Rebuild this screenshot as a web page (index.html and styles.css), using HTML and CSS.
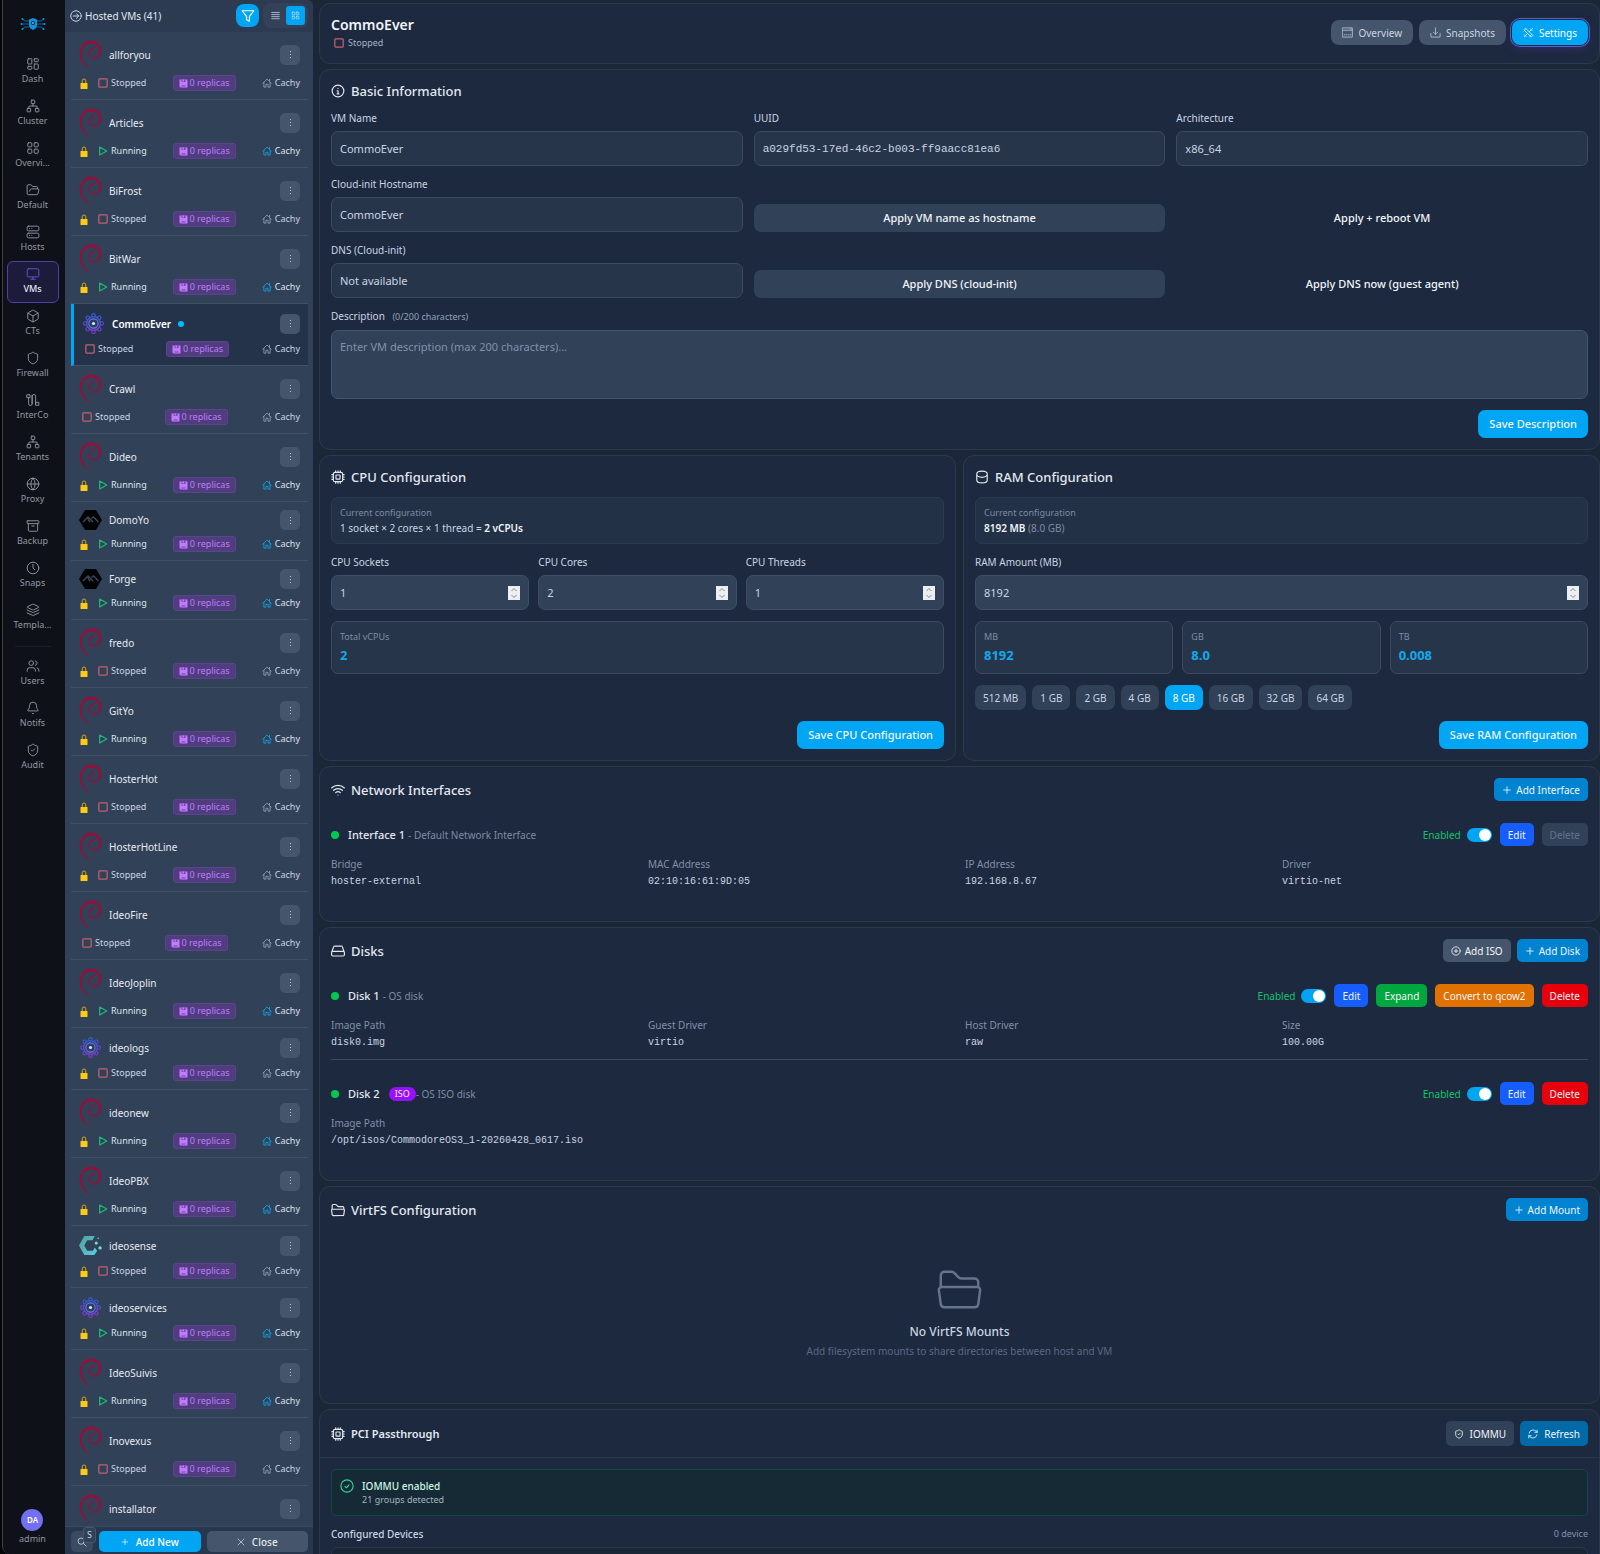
FILE: index.html
```html
<!DOCTYPE html>
<html lang="en">
<head>
    <meta charset="UTF-8">
    <meta name="viewport" content="width=device-width, initial-scale=1.0">
    <title>CommoEver - Settings</title>
    <link rel="stylesheet" href="styles.css">
</head>
<body>
    <!-- Icon sprite -->
    <svg class="sprite" aria-hidden="true">
        <defs>
            <linearGradient id="gear-fill" gradientUnits="userSpaceOnUse" x1="0" y1="0" x2="0" y2="24">
                <stop offset="0" stop-color="#2563d8"/>
                <stop offset="1" stop-color="#8b35d6"/>
            </linearGradient>
            <linearGradient id="sense-fill" x1="0" y1="0" x2="1" y2="1">
                <stop offset="0" stop-color="#4fa39a"/>
                <stop offset="1" stop-color="#5fc8e6"/>
            </linearGradient>
        </defs>
        <symbol id="logo" viewBox="0 0 52 28">
            <g fill="none" stroke="#0a6ba5" stroke-width="2">
                <path d="M18 8H9L6 4M18 14H3M18 20H9l-3 4M34 8h9l3-4M34 14h15M34 20h9l3 4"/>
            </g>
            <g fill="#1192dc">
                <circle cx="5" cy="4" r="2"/><circle cx="3" cy="14" r="2"/><circle cx="5" cy="24" r="2"/>
                <circle cx="47" cy="4" r="2"/><circle cx="49" cy="14" r="2"/><circle cx="47" cy="24" r="2"/>
                <path d="M26 2l8 3v12c0 5-4 7-8 9-4-2-8-4-8-9V5z"/>
            </g>
            <circle cx="26" cy="12" r="4" fill="#0f2536"/>
            <circle cx="26" cy="12" r="2" fill="#4cc3ff"/>
        </symbol>
        <symbol id="dash" viewBox="0 0 24 24"><rect x="3" y="3" width="7" height="9" rx="1"/><rect x="14" y="3" width="7" height="5" rx="1"/><rect x="14" y="12" width="7" height="9" rx="1"/><rect x="3" y="16" width="7" height="5" rx="1"/></symbol>
        <symbol id="cluster" viewBox="0 0 24 24"><rect x="9" y="2" width="6" height="6" rx="1"/><rect x="2" y="16" width="6" height="6" rx="1"/><rect x="16" y="16" width="6" height="6" rx="1"/><path d="M5 16v-3a1 1 0 0 1 1-1h12a1 1 0 0 1 1 1v3M12 12V8"/></symbol>
        <symbol id="grid" viewBox="0 0 24 24"><rect x="3" y="3" width="7" height="7" rx="1.5"/><rect x="14" y="3" width="7" height="7" rx="1.5"/><rect x="3" y="14" width="7" height="7" rx="1.5"/><rect x="14" y="14" width="7" height="7" rx="1.5"/></symbol>
        <symbol id="folder-open" viewBox="0 0 24 24"><path d="M6 14l1.500-2.900A2 2 0 0 1 9.240 10H20a2 2 0 0 1 1.940 2.500l-1.540 6a2 2 0 0 1-1.950 1.500H4a2 2 0 0 1-2-2V5a2 2 0 0 1 2-2h3.900a2 2 0 0 1 1.690.9l.81 1.200a2 2 0 0 0 1.670.9H18a2 2 0 0 1 2 2v2"/></symbol>
        <symbol id="server" viewBox="0 0 24 24"><rect x="2" y="2" width="20" height="8" rx="2"/><rect x="2" y="14" width="20" height="8" rx="2"/><path d="M6 6h.01M10 6h.01M6 18h.01M10 18h.01"/></symbol>
        <symbol id="monitor" viewBox="0 0 24 24"><rect x="2" y="3" width="20" height="14" rx="2"/><path d="M8 21h8M12 17v4"/></symbol>
        <symbol id="box" viewBox="0 0 24 24"><path d="M21 8a2 2 0 0 0-1-1.730l-7-4a2 2 0 0 0-2 0l-7 4A2 2 0 0 0 3 8v8a2 2 0 0 0 1 1.730l7 4a2 2 0 0 0 2 0l7-4A2 2 0 0 0 21 16zM3.300 7l8.700 5 8.700-5M12 22V12"/></symbol>
        <symbol id="shield" viewBox="0 0 24 24"><path d="M20 13c0 5-3.500 7.500-7.660 8.950a1 1 0 0 1-.67 0C7.500 20.500 4 18 4 13V6a1 1 0 0 1 1-1c2 0 4.500-1.200 6.240-2.720a1.170 1.170 0 0 1 1.520 0C14.500 3.800 17 5 19 5a1 1 0 0 1 1 1z"/></symbol>
        <symbol id="shield-check" viewBox="0 0 24 24"><path d="M20 13c0 5-3.500 7.500-7.660 8.950a1 1 0 0 1-.67 0C7.500 20.500 4 18 4 13V6a1 1 0 0 1 1-1c2 0 4.500-1.200 6.240-2.720a1.170 1.170 0 0 1 1.520 0C14.500 3.800 17 5 19 5a1 1 0 0 1 1 1zM9 12l2 2 4-4"/></symbol>
        <symbol id="interco" viewBox="0 0 24 24"><path d="M4.500 8v10.500a3 3 0 0 0 6 0v-13a3 3 0 0 1 6 0V18M2 3h5v5H2zM17 16h5v5h-5zM10.500 4v14"/></symbol>
        <symbol id="globe" viewBox="0 0 24 24"><circle cx="12" cy="12" r="10"/><path d="M12 2a15 15 0 0 0 0 20 15 15 0 0 0 0-20M2 12h20"/></symbol>
        <symbol id="archive" viewBox="0 0 24 24"><rect x="2" y="3" width="20" height="5" rx="1"/><path d="M4 8v11a2 2 0 0 0 2 2h12a2 2 0 0 0 2-2V8M10 12h4"/></symbol>
        <symbol id="clock" viewBox="0 0 24 24"><circle cx="12" cy="12" r="10"/><path d="M12 6v6l3 3"/></symbol>
        <symbol id="layers" viewBox="0 0 24 24"><path d="M12.800 2.200a2 2 0 0 0-1.600 0L2.600 6.100a1 1 0 0 0 0 1.800l8.600 3.900a2 2 0 0 0 1.600 0l8.600-3.900a1 1 0 0 0 0-1.800zM2 12l9.200 4.200a2 2 0 0 0 1.600 0L22 12M2 17l9.200 4.200a2 2 0 0 0 1.600 0L22 17"/></symbol>
        <symbol id="users" viewBox="0 0 24 24"><circle cx="9" cy="7" r="4"/><path d="M16 21v-2a4 4 0 0 0-4-4H6a4 4 0 0 0-4 4v2M22 21v-2a4 4 0 0 0-3-3.870M16 3.130a4 4 0 0 1 0 7.750"/></symbol>
        <symbol id="bell" viewBox="0 0 24 24"><path d="M10.300 21a2 2 0 0 0 3.400 0M3.300 15.300A1 1 0 0 0 4 17h16a1 1 0 0 0 .7-1.700C19.400 14 18 12.500 18 8A6 6 0 0 0 6 8c0 4.500-1.400 6-2.700 7.300"/></symbol>
        <symbol id="arrow-circle" viewBox="0 0 24 24"><circle cx="12" cy="12" r="10.500"/><path d="M6.500 12h11M13 7.500l4.500 4.500-4.500 4.500"/></symbol>
        <symbol id="filter" viewBox="0 0 24 24"><path d="M2 3h20l-7.500 9.500V21l-5-2.500v-6z"/></symbol>
        <symbol id="list" viewBox="0 0 24 24"><path d="M2 4h20M2 9.500h20M2 15h20M2 20.500h20"/></symbol>
        <symbol id="dots" viewBox="0 0 24 24"><circle cx="12" cy="4" r="1.500"/><circle cx="12" cy="12" r="1.500"/><circle cx="12" cy="20" r="1.500"/></symbol>
        <symbol id="lock" viewBox="0 0 16 22"><path fill="none" stroke="#d9a90c" stroke-width="2" d="M4.500 10V5.500a3.500 3.500 0 0 1 7 0V10"/><rect x="1" y="10" width="14" height="12" rx="1" fill="#ffca14"/></symbol>
        <symbol id="stop" viewBox="0 0 24 24"><rect x="2" y="2" width="20" height="20" rx="2"/></symbol>
        <symbol id="play" viewBox="0 0 24 24"><path d="M4 2.500L21 12 4 21.500z"/></symbol>
        <symbol id="disk" viewBox="0 0 18 18"><path fill="#c27aff" d="M1 1h16v16H3l-2-2z"/><path fill="#7a49ad" d="M5 1h8v5H5z"/><path fill="#c27aff" d="M7 1h3v4H7z"/><path fill="#9a60d2" d="M5 12h8v5H5z"/></symbol>
        <symbol id="home" viewBox="0 0 24 24"><path d="M2 12.500L12 2.500l10 10M4.500 10.500V22h5v-7h5v7h5V10.500M18 3v4.500"/></symbol>
        <symbol id="search" viewBox="0 0 24 24"><circle cx="10" cy="10" r="7.500"/><path d="M15.500 15.500L22 22"/></symbol>
        <symbol id="plus" viewBox="0 0 24 24"><path d="M12 4v16M4 12h16"/></symbol>
        <symbol id="cross" viewBox="0 0 24 24"><path d="M3 3l18 18M21 3L3 21"/></symbol>
        <symbol id="plus-circle" viewBox="0 0 24 24"><circle cx="12" cy="12" r="10"/><path d="M12 8v8M8 12h8"/></symbol>
        <symbol id="window" viewBox="0 0 24 24"><path d="M1.500 2h21v20h-21zM1.500 7h21M5 17h1M9 17h1M13 17h1M17 17h2M18 4.500h2"/></symbol>
        <symbol id="download" viewBox="0 0 24 24"><path d="M2 14v8h20v-8M12 2v14M7.500 11.500L12 16l4.500-4.500"/></symbol>
        <symbol id="tools" viewBox="0 0 24 24"><path d="M2.500 5.500l3-3L21.500 18.500l-3 3zM21 3L13.500 10.500M10 14l-7 7M16 4l4 4M3 17l4 4M2 9l3-3M15 20l4-4"/></symbol>
        <symbol id="info" viewBox="0 0 24 24"><circle cx="12" cy="12" r="10"/><path d="M10.500 11.500H12V17M10.500 17h3M12 7.500h.01"/></symbol>
        <symbol id="chip" viewBox="0 0 24 24"><rect x="4" y="4" width="16" height="16" rx="3"/><rect x="8.500" y="8.500" width="7" height="7" rx="1"/><path d="M8 1.500V4M12 1.500V4M16 1.500V4M8 20v2.500M12 20v2.500M16 20v2.500M1.500 8H4M1.500 12H4M1.500 16H4M20 8h2.500M20 12h2.500M20 16h2.500"/></symbol>
        <symbol id="database" viewBox="0 0 24 24"><path d="M3 7c0-3 3-5 9-5s9 2 9 5v10c0 3-3 5-9 5s-9-2-9-5zM3 8c1 3 4 4.500 9 4.500S20 11 21 8"/></symbol>
        <symbol id="wifi" viewBox="0 0 24 24"><path d="M1 8.500a16 16 0 0 1 22 0M4.500 12.500a11 11 0 0 1 15 0M8 16.500a6 6 0 0 1 8 0M12 20.500h.01"/></symbol>
        <symbol id="drive" viewBox="0 0 24 24"><path d="M1 14.500L4.500 5a2 2 0 0 1 2-1.500h11a2 2 0 0 1 2 1.500L23 14.500M3 12.500h18a2 2 0 0 1 2 2v4a2 2 0 0 1-2 2H3a2 2 0 0 1-2-2v-4a2 2 0 0 1 2-2z"/></symbol>
        <symbol id="folder" viewBox="0 0 24 24"><path d="M2 10.700V4.500A2 2 0 0 1 4 2.500h3.800a2 2 0 0 1 1.400.6l2.300 2.400a2 2 0 0 0 1.400.6H20a2 2 0 0 1 2 2v2.600M2.500 10.700h19a1.500 1.500 0 0 1 1.500 1.700l-1 7.400a2 2 0 0 1-2 1.700H4a2 2 0 0 1-2-1.700l-1-7.400a1.500 1.500 0 0 1 1.500-1.700z"/></symbol>
        <symbol id="refresh" viewBox="0 0 24 24"><path d="M2.500 10a10 10 0 0 1 17-4.500L22 8M22 2.500V8h-5.500M21.500 14a10 10 0 0 1-17 4.500L2 16M2 21.500V16h5.500"/></symbol>
        <symbol id="check-circle" viewBox="0 0 24 24"><circle cx="12" cy="12" r="10.500"/><path d="M8.500 12.500l2.500 2.500 4.500-5"/></symbol>
        <symbol id="stepper" viewBox="0 0 12 14"><path d="M3.500 5L6 2.500 8.500 5M3.500 9L6 11.500 8.500 9"/></symbol>
        <symbol id="os-debian" viewBox="0 0 23 29">
            <path fill="#960f3a" d="M22.500 11.500C22.500 4 17.500.3 11.500.5 5 1 .7 7 .7 13.500c0 7 4.800 13.500 11 15C6.500 25.500 2.700 20 2.700 13.500 3 7.500 6.500 4 11.500 3.600c5-.3 8.500 2.400 8.500 6.900 0 3-1 5.500-3 6.800 3.500-.8 5.500-3 5.500-5.800z"/>
            <path fill="none" stroke="#960f3a" stroke-width="1.300" d="M19 16.500c-3 2.700-7.500 1.500-8.500-2-.8-3.500 1.500-7 5.500-6.500"/>
        </symbol>
        <symbol id="os-alpine" viewBox="0 0 23 20">
            <path fill="#020305" d="M6 0h11l6 10-6 10H6L0 10z"/>
            <path fill="none" stroke="#3c4654" stroke-width="1.500" d="M4 12l5-5 5 5M12.500 8.500L14.500 7l5 5M9 9.500l2 2.500"/>
        </symbol>
        <symbol id="os-gear" viewBox="0 0 24 24">
            <g fill="none" stroke="url(#gear-fill)" stroke-width="1.300">
                <circle cx="12" cy="2.700" r="2"/><circle cx="18.600" cy="5.400" r="2"/><circle cx="21.300" cy="12" r="2"/><circle cx="18.600" cy="18.600" r="2"/>
                <circle cx="12" cy="21.300" r="2"/><circle cx="5.400" cy="18.600" r="2"/><circle cx="2.700" cy="12" r="2"/><circle cx="5.400" cy="5.400" r="2"/>
            </g>
            <circle cx="12" cy="12" r="7.800" fill="#2c3c66" stroke="url(#gear-fill)" stroke-width="1.500"/>
            <circle cx="12" cy="12" r="5.300" fill="none" stroke="#6a7fce" stroke-width="1.200"/>
            <circle cx="12" cy="12" r="1.800" fill="#dbe4ff"/>
        </symbol>
        <symbol id="os-sense" viewBox="0 0 24 20">
            <path fill="url(#sense-fill)" d="M5.500 0h11L14 4.500H8.500L5.500 10l3 5.500h6L16.500 12l2.500 3.500-3 4.500H5.500L0 10z"/>
            <circle cx="18" cy="7.500" r="1.600" fill="#6fe0d0"/><circle cx="22" cy="12.500" r="1.800" fill="#6fe0d0"/><circle cx="20" cy="2.500" r=".8" fill="#6fe0d0"/>
        </symbol>
    </svg>

    <div class="app">
        <nav class="rail">
            <svg class="rail-logo"><use href="#logo"/></svg>
            <a class="rail-item" href="#"><svg class="icon"><use href="#dash"/></svg>Dash</a>
            <a class="rail-item" href="#"><svg class="icon"><use href="#cluster"/></svg>Cluster</a>
            <a class="rail-item" href="#"><svg class="icon"><use href="#grid"/></svg>Overvi...</a>
            <a class="rail-item" href="#"><svg class="icon"><use href="#folder-open"/></svg>Default</a>
            <a class="rail-item" href="#"><svg class="icon"><use href="#server"/></svg>Hosts</a>
            <a class="rail-item active" href="#"><svg class="icon"><use href="#monitor"/></svg>VMs</a>
            <a class="rail-item" href="#"><svg class="icon"><use href="#box"/></svg>CTs</a>
            <a class="rail-item" href="#"><svg class="icon"><use href="#shield"/></svg>Firewall</a>
            <a class="rail-item" href="#"><svg class="icon"><use href="#interco"/></svg>InterCo</a>
            <a class="rail-item" href="#"><svg class="icon"><use href="#cluster"/></svg>Tenants</a>
            <a class="rail-item" href="#"><svg class="icon"><use href="#globe"/></svg>Proxy</a>
            <a class="rail-item" href="#"><svg class="icon"><use href="#archive"/></svg>Backup</a>
            <a class="rail-item" href="#"><svg class="icon"><use href="#clock"/></svg>Snaps</a>
            <a class="rail-item" href="#"><svg class="icon"><use href="#layers"/></svg>Templa...</a>
            <hr class="rail-divider">
            <a class="rail-item" href="#"><svg class="icon"><use href="#users"/></svg>Users</a>
            <a class="rail-item" href="#"><svg class="icon"><use href="#bell"/></svg>Notifs</a>
            <a class="rail-item" href="#"><svg class="icon"><use href="#shield-check"/></svg>Audit</a>
            <a class="rail-user" href="#"><span class="avatar">DA</span>admin</a>
        </nav>

        <aside class="sidebar">
            <div class="sidebar-header">
                <svg class="icon"><use href="#arrow-circle"/></svg>
                <h2>Hosted VMs (41)</h2>
                <button class="filter-btn" aria-label="Filter"><svg class="icon"><use href="#filter"/></svg></button>
                <div class="view-switch">
                    <button aria-label="List view"><svg class="icon"><use href="#list"/></svg></button>
                    <button class="active" aria-label="Grid view"><svg class="icon"><use href="#grid"/></svg></button>
                </div>
            </div>
            <ul class="vm-list" id="vm-list"></ul>
            <div class="sidebar-footer">
                <button class="search-btn" aria-label="Search"><svg class="icon"><use href="#search"/></svg><kbd>S</kbd></button>
                <button class="footer-btn primary"><svg class="icon"><use href="#plus"/></svg>Add New</button>
                <button class="footer-btn"><svg class="icon"><use href="#cross"/></svg>Close</button>
            </div>
        </aside>

        <main>
            <section class="panel page-header">
                <div>
                    <h1>CommoEver</h1>
                    <p class="status stopped"><svg class="icon"><use href="#stop"/></svg>Stopped</p>
                </div>
                <div class="tabs">
                    <button class="tab"><svg class="icon"><use href="#window"/></svg>Overview</button>
                    <button class="tab"><svg class="icon"><use href="#download"/></svg>Snapshots</button>
                    <button class="tab active"><svg class="icon"><use href="#tools"/></svg>Settings</button>
                </div>
            </section>

            <section class="panel">
                <h3><svg class="icon"><use href="#info"/></svg>Basic Information</h3>
                <div class="form-grid">
                    <div class="field">
                        <label for="vm-name">VM Name</label>
                        <input type="text" id="vm-name" value="CommoEver" readonly>
                    </div>
                    <div class="field">
                        <label for="uuid">UUID</label>
                        <input type="text" id="uuid" class="mono" value="a029fd53-17ed-46c2-b003-ff9aacc81ea6" readonly>
                    </div>
                    <div class="field">
                        <label for="arch">Architecture</label>
                        <input type="text" id="arch" value="x86_64" readonly>
                    </div>
                    <div class="field">
                        <label for="hostname">Cloud-init Hostname</label>
                        <input type="text" id="hostname" value="CommoEver" readonly>
                    </div>
                    <button class="btn btn-secondary">Apply VM name as hostname</button>
                    <button class="btn btn-ghost">Apply + reboot VM</button>
                    <div class="field">
                        <label for="dns">DNS (Cloud-init)</label>
                        <input type="text" id="dns" value="Not available" readonly>
                    </div>
                    <button class="btn btn-secondary">Apply DNS (cloud-init)</button>
                    <button class="btn btn-ghost">Apply DNS now (guest agent)</button>
                    <div class="field full">
                        <label for="description">Description <span class="hint">(0/200 characters)</span></label>
                        <textarea id="description" placeholder="Enter VM description (max 200 characters)..."></textarea>
                    </div>
                </div>
                <div class="actions"><button class="btn btn-primary">Save Description</button></div>
            </section>

            <div class="two-cols">
                <section class="panel">
                    <h3><svg class="icon"><use href="#chip"/></svg>CPU Configuration</h3>
                    <div class="current">
                        <span class="caption">Current configuration</span>
                        <p>1 socket × 2 cores × 1 thread = <strong>2 vCPUs</strong></p>
                    </div>
                    <div class="triple">
                        <div class="field">
                            <label for="sockets">CPU Sockets</label>
                            <div class="number"><input type="number" id="sockets" value="1"><svg><use href="#stepper"/></svg></div>
                        </div>
                        <div class="field">
                            <label for="cores">CPU Cores</label>
                            <div class="number"><input type="number" id="cores" value="2"><svg><use href="#stepper"/></svg></div>
                        </div>
                        <div class="field">
                            <label for="threads">CPU Threads</label>
                            <div class="number"><input type="number" id="threads" value="1"><svg><use href="#stepper"/></svg></div>
                        </div>
                    </div>
                    <div class="stat"><span class="caption">Total vCPUs</span><b>2</b></div>
                    <div class="actions"><button class="btn btn-primary">Save CPU Configuration</button></div>
                </section>

                <section class="panel">
                    <h3><svg class="icon"><use href="#database"/></svg>RAM Configuration</h3>
                    <div class="current">
                        <span class="caption">Current configuration</span>
                        <p><strong>8192 MB</strong> <span class="muted">(8.0 GB)</span></p>
                    </div>
                    <div class="field">
                        <label for="ram">RAM Amount (MB)</label>
                        <div class="number"><input type="number" id="ram" value="8192"><svg><use href="#stepper"/></svg></div>
                    </div>
                    <div class="triple">
                        <div class="stat"><span class="caption">MB</span><b>8192</b></div>
                        <div class="stat"><span class="caption">GB</span><b>8.0</b></div>
                        <div class="stat"><span class="caption">TB</span><b>0.008</b></div>
                    </div>
                    <div class="chips">
                        <button>512 MB</button>
                        <button>1 GB</button>
                        <button>2 GB</button>
                        <button>4 GB</button>
                        <button class="active">8 GB</button>
                        <button>16 GB</button>
                        <button>32 GB</button>
                        <button>64 GB</button>
                    </div>
                    <div class="actions"><button class="btn btn-primary">Save RAM Configuration</button></div>
                </section>
            </div>

            <section class="panel">
                <div class="panel-head">
                    <h3><svg class="icon"><use href="#wifi"/></svg>Network Interfaces</h3>
                    <button class="btn-sm add"><svg class="icon"><use href="#plus"/></svg>Add Interface</button>
                </div>
                <div class="device-list">
                    <div class="device">
                        <div class="device-head">
                            <i class="dot"></i><b>Interface 1</b><span class="muted">- Default Network Interface</span>
                            <div class="device-actions">
                                <label class="toggle">Enabled<input type="checkbox" checked></label>
                                <button class="btn-sm edit">Edit</button>
                                <button class="btn-sm" disabled>Delete</button>
                            </div>
                        </div>
                        <dl>
                            <div><dt>Bridge</dt><dd>hoster-external</dd></div>
                            <div><dt>MAC Address</dt><dd>02:10:16:61:9D:05</dd></div>
                            <div><dt>IP Address</dt><dd>192.168.8.67</dd></div>
                            <div><dt>Driver</dt><dd>virtio-net</dd></div>
                        </dl>
                    </div>
                </div>
            </section>

            <section class="panel">
                <div class="panel-head">
                    <h3><svg class="icon"><use href="#drive"/></svg>Disks</h3>
                    <button class="btn-sm iso-btn"><svg class="icon"><use href="#plus-circle"/></svg>Add ISO</button>
                    <button class="btn-sm add"><svg class="icon"><use href="#plus"/></svg>Add Disk</button>
                </div>
                <div class="device-list">
                    <div class="device">
                        <div class="device-head">
                            <i class="dot"></i><b>Disk 1</b><span class="muted">- OS disk</span>
                            <div class="device-actions">
                                <label class="toggle">Enabled<input type="checkbox" checked></label>
                                <button class="btn-sm edit">Edit</button>
                                <button class="btn-sm expand">Expand</button>
                                <button class="btn-sm convert">Convert to qcow2</button>
                                <button class="btn-sm delete">Delete</button>
                            </div>
                        </div>
                        <dl>
                            <div><dt>Image Path</dt><dd>disk0.img</dd></div>
                            <div><dt>Guest Driver</dt><dd>virtio</dd></div>
                            <div><dt>Host Driver</dt><dd>raw</dd></div>
                            <div><dt>Size</dt><dd>100.00G</dd></div>
                        </dl>
                    </div>
                    <div class="device">
                        <div class="device-head">
                            <i class="dot"></i><b>Disk 2</b><span class="iso">ISO</span><span class="muted">- OS ISO disk</span>
                            <div class="device-actions">
                                <label class="toggle">Enabled<input type="checkbox" checked></label>
                                <button class="btn-sm edit">Edit</button>
                                <button class="btn-sm delete">Delete</button>
                            </div>
                        </div>
                        <dl>
                            <div><dt>Image Path</dt><dd>/opt/isos/CommodoreOS3_1-20260428_0617.iso</dd></div>
                        </dl>
                    </div>
                </div>
            </section>

            <section class="panel">
                <div class="panel-head">
                    <h3><svg class="icon"><use href="#folder"/></svg>VirtFS Configuration</h3>
                    <button class="btn-sm add"><svg class="icon"><use href="#plus"/></svg>Add Mount</button>
                </div>
                <div class="empty">
                    <svg class="icon"><use href="#folder"/></svg>
                    <h4>No VirtFS Mounts</h4>
                    <p>Add filesystem mounts to share directories between host and VM</p>
                </div>
            </section>

            <section class="panel pci">
                <div class="pci-head">
                    <h3><svg class="icon"><use href="#chip"/></svg>PCI Passthrough</h3>
                    <button class="btn-sm iommu"><svg class="icon"><use href="#shield-check"/></svg>IOMMU</button>
                    <button class="btn-sm refresh"><svg class="icon"><use href="#refresh"/></svg>Refresh</button>
                </div>
                <div class="pci-body">
                    <div class="alert">
                        <svg class="icon"><use href="#check-circle"/></svg>
                        <div><b>IOMMU enabled</b><p>21 groups detected</p></div>
                    </div>
                    <div class="devices-title"><b>Configured Devices</b><span>0 device</span></div>
                    <div class="devices-box"></div>
                </div>
            </section>
        </main>
    </div>

    <script src="script.js"></script>
</body>
</html>
```

FILE: styles.css
```css
* {
    box-sizing: border-box;
    margin: 0;
    padding: 0;
}
body {
    font-family: "Noto Sans", sans-serif;
    font-size: 10px;
    line-height: 14px;
    background-color: #050608;
    color: #cad5e2;
}
button, input, textarea {
    font: inherit;
    color: inherit;
}
button {
    border: none;
    cursor: pointer;
    white-space: nowrap;
}
a {
    color: inherit;
    text-decoration: none;
}
.sprite {
    position: absolute;
    width: 0;
    height: 0;
}
.icon {
    width: 14px;
    height: 14px;
    flex: none;
    fill: none;
    stroke: currentColor;
    stroke-width: 2;
    stroke-linecap: round;
    stroke-linejoin: round;
}
.app {
    display: flex;
    height: 100vh;
    overflow: hidden;
    margin-left: 2px;
    border-left: 1px solid #3f4046;
    border-bottom-left-radius: 8px;
    background-color: #1b2736;
}

/* Navigation rail */
.rail {
    width: 62px;
    flex: none;
    display: flex;
    flex-direction: column;
    align-items: center;
    padding: 17px 3px 9px 0;
    background-color: #0f1119;
    color: #9297a1;
    font-size: 9px;
    line-height: 12px;
}
.rail-logo {
    width: 26px;
    height: 14px;
    margin-bottom: 20px;
    flex: none;
}
.rail-item {
    width: 52px;
    height: 42px;
    display: flex;
    flex-direction: column;
    align-items: center;
    gap: 2px;
    padding-top: 5px;
    border: 1px solid transparent;
    border-radius: 6px;
}
.rail-item .icon {
    stroke-width: 1.6;
}
.rail-item.active {
    background-color: #1d1b3a;
    border-color: #4b41a8;
    color: #e8eaf2;
    font-weight: 500;
}
.rail-item.active .icon {
    color: #6058d8;
}
.rail-divider {
    width: 36px;
    margin: 7px 0 6px;
    border: none;
    border-top: 1px solid #1d202a;
}
.rail-user {
    margin-top: auto;
    display: flex;
    flex-direction: column;
    align-items: center;
    gap: 2px;
}
.avatar {
    width: 22px;
    height: 22px;
    border-radius: 50%;
    background-color: #7170f2;
    color: #fff;
    font-size: 8px;
    font-weight: 600;
    line-height: 22px;
    text-align: center;
}

/* VM sidebar */
.sidebar {
    width: 248px;
    flex: none;
    display: flex;
    flex-direction: column;
    background-color: #314158;
    border-top-right-radius: 6px;
    color: #cad5e2;
}
.sidebar-header {
    height: 32px;
    flex: none;
    display: flex;
    align-items: center;
    gap: 3px;
    padding: 0 5px 1px;
    background-color: #2c3b52;
    border-top-right-radius: 6px;
}
.sidebar-header h2 {
    font-size: 10px;
    font-weight: 400;
    color: #e2e8f0;
    margin-right: auto;
}
.sidebar-header > .icon {
    width: 12px;
    height: 12px;
}
.filter-btn {
    width: 23px;
    height: 23px;
    display: flex;
    align-items: center;
    justify-content: center;
    border-radius: 8px;
    background-color: #00a6f4;
    color: #fff;
}
.view-switch {
    display: flex;
    gap: 1px;
    margin-left: 1px;
    padding: 3px;
    border-radius: 8px;
    background-color: #334259;
}
.view-switch button {
    width: 19px;
    height: 19px;
    display: flex;
    align-items: center;
    justify-content: center;
    border-radius: 3px;
    background: none;
}
.view-switch .icon {
    width: 9px;
    height: 9px;
}
.view-switch .active {
    background-color: #00a6f4;
}
.vm-list {
    flex: 1;
    min-height: 0;
    overflow: hidden;
    padding: 0 5px 0 6px;
    list-style: none;
}
.vm {
    padding: 8px 8px 8px 9px;
    border-bottom: 1px solid #40506a;
}
.vm.selected {
    border-left: 3px solid #00a6f4;
    background-color: #24334a;
}
.vm-top {
    display: flex;
    align-items: center;
    gap: 7px;
    margin: 0 0 6px -1px;
}
.vm-os {
    width: 23px;
    flex: none;
}
.os-debian { height: 29px; }
.os-alpine { height: 20px; }
.os-gear { height: 23px; padding: 1px; }
.os-sense { height: 23px; }
.vm-name {
    font-weight: 400;
    color: #e6ebf3;
}
.selected .vm-name {
    font-weight: 600;
    color: #fff;
}
.vm-dot {
    width: 6px;
    height: 6px;
    border-radius: 50%;
    background-color: #00bcff;
}
.vm-menu {
    width: 20px;
    height: 20px;
    margin-left: auto;
    display: flex;
    align-items: center;
    justify-content: center;
    border-radius: 5px;
    background-color: #45556c;
}
.vm-menu .icon {
    width: 9px;
    height: 9px;
    fill: currentColor;
    stroke: none;
}
.vm-bottom {
    display: flex;
    align-items: center;
    justify-content: space-between;
    height: 16px;
    font-size: 9px;
}
.vm-state, .vm-host {
    display: flex;
    align-items: center;
    gap: 3px;
}
.vm-state .icon {
    width: 10px;
    height: 10px;
    margin-left: 2px;
}
.vm-lock {
    width: 8px;
    height: 11px;
    margin-right: 5px;
}
.vm-state .icon, .vm-host .icon, .status .icon {
    stroke-width: 3;
}
.vm-state.stopped .icon, .status .icon {
    color: #c2606c;
}
.vm-state.running .icon {
    color: #1fb877;
}
.vm-host .icon {
    width: 10px;
    height: 10px;
    stroke-width: 2;
    color: #90a1b9;
}
.running + .vm-badge + .vm-host .icon {
    color: #12a5e8;
}
.running, .running ~ .vm-host {
    color: #dde4ee;
}
.vm-badge {
    display: flex;
    align-items: center;
    gap: 2px;
    height: 16px;
    padding: 0 5px;
    border: 1px solid #5f4193;
    border-radius: 3px;
    background-color: #4f3d7d;
    color: #c27aff;
}
.vm-badge svg {
    width: 9px;
    height: 9px;
}
.sidebar-footer {
    height: 28px;
    flex: none;
    display: flex;
    gap: 6px;
    padding: 4px 5px 2px 6px;
    border-top: 1px solid #3b4b63;
    background-color: #28374d;
}
.search-btn {
    position: relative;
    width: 22px;
    display: flex;
    align-items: center;
    justify-content: center;
    border-radius: 5px;
    background-color: #3a4a61;
}
.search-btn .icon {
    width: 10px;
    height: 10px;
}
.search-btn kbd {
    position: absolute;
    top: -4px;
    right: -3px;
    padding: 0 3px;
    border: 1px solid #45556c;
    border-radius: 3px;
    background-color: #314158;
    font-family: inherit;
    font-size: 9px;
    line-height: 14px;
}
.footer-btn {
    flex: 1;
    display: flex;
    align-items: center;
    justify-content: center;
    gap: 7px;
    border-radius: 5px;
    background-color: #45556c;
    color: #e2e8f0;
    font-weight: 500;
}
.footer-btn .icon {
    width: 8px;
    height: 8px;
}
.footer-btn.primary {
    background-color: #00a6f4;
    color: #fff;
}

/* Main column */
main {
    flex: 1;
    min-width: 0;
    display: flex;
    flex-direction: column;
    gap: 5px;
    padding: 3px 0 0 6px;
    overflow: hidden;
}
.panel {
    flex: none;
    padding: 11px;
    border: 1px solid #2a394d;
    border-radius: 11px;
    background-color: #1d293f;
}
.page-header {
    display: flex;
    align-items: center;
    justify-content: space-between;
    min-height: 61px;
    padding-bottom: 13px;
}
h1 {
    font-size: 14px;
    font-weight: 600;
    line-height: 18px;
    color: #f1f5f9;
}
.status {
    display: flex;
    align-items: center;
    gap: 4px;
    padding: 2px 0 0 3px;
    font-size: 9px;
    color: #a4b1c4;
}
.status .icon {
    width: 10px;
    height: 10px;
}
.tabs {
    display: flex;
    gap: 6px;
}
.tab {
    display: flex;
    align-items: center;
    gap: 5px;
    height: 25px;
    padding: 0 11px;
    border-radius: 8px;
    background-color: #45556c;
}
.tab .icon {
    width: 11px;
    height: 11px;
    opacity: 0.8;
}
.tab.active {
    background-color: #00a6f4;
    color: #fff;
    box-shadow: 0 0 0 1px #1d293d, 0 0 0 2px #4f5fd0, 0 4px 8px #4a2f8a80;
}
h3 {
    display: flex;
    align-items: center;
    gap: 6px;
    margin-bottom: 10px;
    font-size: 13px;
    font-weight: 500;
    line-height: 20px;
    color: #e2e8f0;
}
.form-grid {
    display: grid;
    grid-template-columns: repeat(3, 1fr);
    gap: 11px;
    align-items: end;
}
.field {
    display: flex;
    flex-direction: column;
    gap: 6px;
    min-width: 0;
}
.full {
    grid-column: 1 / -1;
}
.hint {
    margin-left: 5px;
    font-size: 9px;
    color: #90a1b9;
}
.field > input, .number, textarea {
    width: 100%;
    height: 35px;
    padding: 0 8px;
    border: 1px solid #3b4b60;
    border-radius: 7px;
    background-color: #27354a;
    font-size: 11px;
}
.field > .mono, dd {
    font-family: "Liberation Mono", monospace;
}
textarea {
    display: block;
    height: 69px;
    padding: 8px;
    line-height: 16px;
    border-color: #45556c;
    background-color: #314158;
    resize: none;
}
textarea::placeholder {
    color: #8291a8;
}
.number {
    display: flex;
    align-items: center;
    background-color: #314158;
    border-color: #3f4e65;
}
.number input {
    flex: 1;
    min-width: 0;
    border: none;
    background: none;
    appearance: textfield;
}
.number input::-webkit-inner-spin-button {
    display: none;
}
.number svg {
    width: 12px;
    height: 14px;
    background-color: #eceef2;
    fill: none;
    stroke: #858b95;
}
.btn {
    height: 28px;
    padding: 0 11px;
    border-radius: 7px;
    font-size: 11px;
    font-weight: 500;
    color: #f1f5f9;
}
.btn-primary {
    background-color: #00a6f4;
}
.btn-secondary {
    background-color: #314158;
}
.btn-ghost {
    background: none;
}
.actions {
    display: flex;
    justify-content: flex-end;
    margin-top: 11px;
}
.two-cols {
    flex: none;
    display: grid;
    grid-template-columns: 1fr 1fr;
    gap: 7px;
}
.two-cols .panel {
    display: flex;
    flex-direction: column;
    gap: 11px;
}
.two-cols h3 {
    margin-bottom: -1px;
}
.two-cols .actions {
    margin-top: auto;
}
.triple {
    display: grid;
    grid-template-columns: repeat(3, 1fr);
    gap: 9px;
}
.current, .stat {
    padding: 8px;
    border: 1px solid #2c3b50;
    border-radius: 7px;
    background-color: #233146;
}
.current strong {
    color: #f1f5f9;
    font-weight: 600;
}
.current .caption, .stat .caption {
    display: block;
    font-size: 9px;
    color: #7d8ca3;
}
.current {
    height: 47px;
}
.current p {
    margin-top: 1px;
}
.stat {
    height: 53px;
    border-color: #3b4b60;
    background-color: #27354a;
}
.stat b {
    display: block;
    margin-top: 2px;
    font-size: 13px;
    line-height: 18px;
    color: #12a9ea;
}
.muted {
    color: #7d8ca3;
}
.chips {
    display: flex;
    gap: 6px;
}
.chips button {
    height: 25px;
    padding: 0 8px;
    border-radius: 7px;
    background-color: #314158;
}
.chips .active {
    background-color: #00a6f4;
    color: #fff;
}

/* Network interfaces and disks */
.panel-head, .pci-head {
    display: flex;
    align-items: center;
    gap: 6px;
}
.panel-head h3, .pci-head h3 {
    margin: 0 auto 0 0;
}
.btn-sm {
    display: flex;
    align-items: center;
    justify-content: center;
    gap: 4px;
    height: 23px;
    padding: 0 8px;
    border-radius: 5px;
    background-color: #314158;
    color: #f1f5f9;
}
.btn-sm .icon {
    width: 10px;
    height: 10px;
}
.btn-sm:disabled {
    color: #62748e;
}
.btn-sm.add { background-color: #0084d1; }
.btn-sm.iso-btn { background-color: #45556c; }
.btn-sm.edit { background-color: #155dfc; }
.btn-sm.expand { background-color: #00a63e; }
.btn-sm.convert { background-color: #e17100; }
.btn-sm.delete { background-color: #e7000b; }
.device-list {
    display: flex;
    flex-direction: column;
    gap: 11px;
    padding: 11px 0 12px;
}
.device {
    padding: 11px 0 9px;
    border-bottom: 1px solid #3b495e;
}
.device:last-child {
    border-bottom: none;
}
.device-head {
    display: flex;
    align-items: center;
    margin-bottom: 11px;
}
.device-head b {
    margin-right: 3px;
    font-size: 11px;
    font-weight: 500;
    color: #e2e8f0;
}
.dot {
    width: 8px;
    height: 8px;
    margin-right: 9px;
    border-radius: 50%;
    background-color: #00c950;
}
.iso {
    margin-left: 6px;
    padding: 0 6px;
    border-radius: 7px;
    background-color: #9810fa;
    color: #f3e8ff;
    font-size: 9px;
}
.device-actions {
    display: flex;
    align-items: center;
    gap: 8px;
    margin-left: auto;
}
.toggle {
    display: flex;
    align-items: center;
    gap: 6px;
    color: #12c46b;
}
.toggle input {
    appearance: none;
    display: flex;
    align-items: center;
    justify-content: flex-end;
    width: 25px;
    height: 14px;
    padding: 1px;
    border-radius: 7px;
    background-color: #00a6f4;
}
.toggle input::before {
    content: "";
    width: 12px;
    height: 12px;
    border-radius: 50%;
    background-color: #fff;
}
dl {
    display: grid;
    grid-template-columns: repeat(4, 1fr);
    gap: 11px;
}
dt {
    margin-bottom: 4px;
    color: #8290a7;
}
dd {
    white-space: nowrap;
}

/* VirtFS */
.empty {
    display: flex;
    flex-direction: column;
    align-items: center;
    padding: 46px 0 34px;
    color: #5a6980;
}
.empty .icon {
    width: 45px;
    height: 45px;
    stroke-width: 1.3;
    color: #64748b;
}
.empty h4 {
    margin: 12px 0 4px;
    font-size: 12px;
    font-weight: 500;
    line-height: 16px;
    color: #cad5e2;
}

/* PCI passthrough */
.pci {
    padding: 0;
    border-bottom-left-radius: 0;
    border-bottom-right-radius: 0;
}
.pci h3 {
    font-size: 11px;
    font-weight: 600;
}
.pci-head {
    padding: 11px;
    border-bottom: 1px solid #2a394d;
}
.pci-head .btn-sm {
    height: 25px;
    gap: 6px;
}
.pci-head .refresh {
    background-color: #0069a8;
}
.pci-body {
    padding: 11px;
}
.alert {
    display: flex;
    gap: 8px;
    height: 47px;
    padding: 9px 8px;
    border: 1px solid #14464a;
    border-radius: 5px;
    background-color: #162a36;
}
.alert .icon {
    color: #34d399;
}
.alert b {
    font-weight: 500;
    color: #cdf5e4;
}
.alert p {
    font-size: 9px;
    color: #a3b5bd;
}
.devices-title {
    display: flex;
    justify-content: space-between;
    margin: 11px 0 6px;
}
.devices-title b {
    font-weight: 500;
}
.devices-title span {
    font-size: 9px;
    color: #8290a7;
}
.devices-box {
    height: 80px;
    border: 1px solid #2a394d;
    border-radius: 7px;
    background-color: #1a2536;
}
```

FILE: script.js
```js
const vms = [
    { name: 'allforyou', os: 'debian', state: 'Stopped', lock: true },
    { name: 'Articles', os: 'debian', state: 'Running', lock: true },
    { name: 'BiFrost', os: 'debian', state: 'Stopped', lock: true },
    { name: 'BitWar', os: 'debian', state: 'Running', lock: true },
    { name: 'CommoEver', os: 'gear', state: 'Stopped', selected: true },
    { name: 'Crawl', os: 'debian', state: 'Stopped' },
    { name: 'Dideo', os: 'debian', state: 'Running', lock: true },
    { name: 'DomoYo', os: 'alpine', state: 'Running', lock: true },
    { name: 'Forge', os: 'alpine', state: 'Running', lock: true },
    { name: 'fredo', os: 'debian', state: 'Stopped', lock: true },
    { name: 'GitYo', os: 'debian', state: 'Running', lock: true },
    { name: 'HosterHot', os: 'debian', state: 'Stopped', lock: true },
    { name: 'HosterHotLine', os: 'debian', state: 'Stopped', lock: true },
    { name: 'IdeoFire', os: 'debian', state: 'Stopped' },
    { name: 'IdeoJoplin', os: 'debian', state: 'Running', lock: true },
    { name: 'ideologs', os: 'gear', state: 'Stopped', lock: true },
    { name: 'ideonew', os: 'debian', state: 'Running', lock: true },
    { name: 'IdeoPBX', os: 'debian', state: 'Running', lock: true },
    { name: 'ideosense', os: 'sense', state: 'Stopped', lock: true },
    { name: 'ideoservices', os: 'gear', state: 'Running', lock: true },
    { name: 'IdeoSuivis', os: 'debian', state: 'Running', lock: true },
    { name: 'Inovexus', os: 'debian', state: 'Stopped', lock: true },
    { name: 'installator', os: 'debian' }
];

const icon = (id) => `<svg class="icon"><use href="#${id}"/></svg>`;

// No status row until the VM has reported a state
const statusRow = (vm) => !vm.state ? '' : `
        <div class="vm-bottom">
            <span class="vm-state ${vm.state.toLowerCase()}">
                ${vm.lock ? '<svg class="vm-lock"><use href="#lock"/></svg>' : ''}
                ${icon(vm.state === 'Running' ? 'play' : 'stop')}${vm.state}
            </span>
            <span class="vm-badge"><svg><use href="#disk"/></svg>0 replicas</span>
            <span class="vm-host">${icon('home')}Cachy</span>
        </div>`;

document.getElementById('vm-list').innerHTML = vms.map(vm => `
    <li class="vm ${vm.selected ? 'selected' : ''}">
        <div class="vm-top">
            <svg class="vm-os os-${vm.os}"><use href="#os-${vm.os}"/></svg>
            <span class="vm-name">${vm.name}</span>
            ${vm.selected ? '<i class="vm-dot"></i>' : ''}
            <button class="vm-menu" aria-label="Actions for ${vm.name}">${icon('dots')}</button>
        </div>
        ${statusRow(vm)}
    </li>`).join('');
```
